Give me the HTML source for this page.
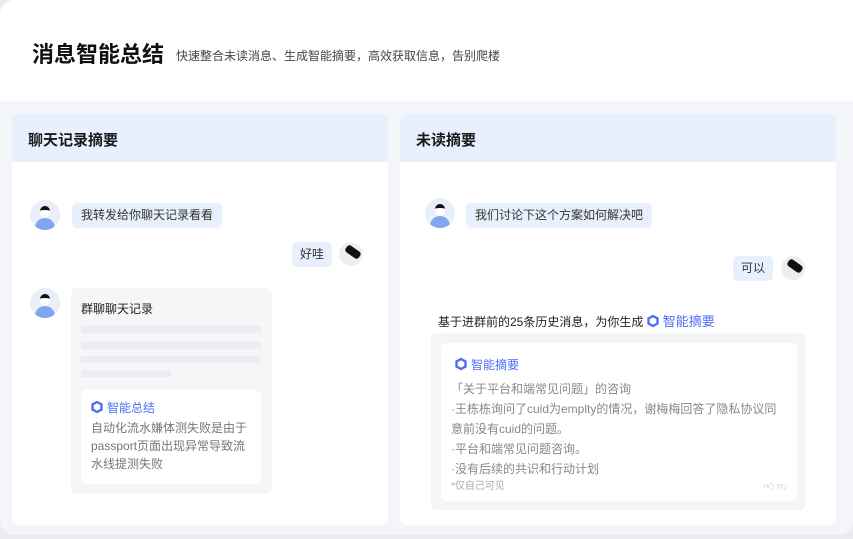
<!DOCTYPE html><html><head><meta charset="utf-8"><style>
*{margin:0;padding:0;box-sizing:border-box}
body{width:853px;height:539px;background:#e9ebf0;font-family:"Liberation Sans","Noto Sans CJK SC",sans-serif;position:relative;overflow:hidden}
.wrap{position:absolute;left:0;top:0;width:853px;height:535px;background:#f3f5f9;border-radius:14px 0 14px 14px;overflow:hidden}
.top{position:absolute;left:0;top:0;width:853px;height:101px;background:#fff}
.h1{position:absolute;left:32px;top:37px;font-size:22px;font-weight:bold;color:#111}
.sub{position:absolute;left:176px;top:47px;font-size:12px;color:#444}
.card{position:absolute;top:114px;height:411px;background:#fff;border-radius:8px;overflow:hidden}
.ch{height:48px;background:#e8f0fd;font-size:15px;font-weight:bold;color:#1a1a1a;padding:15px 0 0 16px}
.av{position:absolute;width:30px;height:30px;border-radius:50%;background:#e9eef8;overflow:hidden}
.av .b{position:absolute;left:5px;top:18px;width:20px;height:16px;border-radius:10px 10px 0 0;background:#7fa6ef}
.av .h{position:absolute;left:10px;top:6px;width:10px;height:12px;border-radius:5px;background:#fff;border-top:4px solid #111}
.av2{position:absolute;width:24px;height:24px;border-radius:50%;background:#eceef2;overflow:hidden}
.av2 .h{position:absolute;left:6px;top:6px;width:16px;height:8px;background:#111;transform:rotate(35deg);border-radius:3px}
.bub{position:absolute;background:#e8f0fd;border-radius:5px;font-size:12px;color:#333;height:25px;line-height:25px;padding:0 9px}
.t{position:absolute;font-size:12px;color:#222}
.g{color:#888}
.blue{color:#4d6ef5}
.ic{display:inline-block;width:12px;height:12px;vertical-align:-1px;margin-right:4px}
</style></head><body>
<div class="wrap">
<div class="top"><div class="h1">消息智能总结</div><div class="sub">快速整合未读消息、生成智能摘要，高效获取信息，告别爬楼</div></div>
<div class="card" style="left:12px;width:376px">
<div class="ch">聊天记录摘要</div>
</div>
<div class="card" style="left:400px;width:436px">
<div class="ch">未读摘要</div>
</div>
</div>
<div class="av" style="left:30px;top:200px"><div class="b"></div><div class="h"></div></div>
<div class="bub" style="left:72px;top:203px">我转发给你聊天记录看看</div>
<div class="bub" style="left:292px;top:242px;padding:0 8px">好哇</div>
<div class="av2" style="left:339px;top:242px"><div class="h"></div></div>
<div class="av" style="left:30px;top:288px"><div class="b"></div><div class="h"></div></div>
<div style="position:absolute;left:71px;top:288px;width:201px;height:206px;background:#f5f6f8;border-radius:6px">
<div class="t" style="left:10px;top:12px">群聊聊天记录</div>
<div style="position:absolute;left:10px;top:38px;width:180px;height:7px;background:#ebedf1"></div>
<div style="position:absolute;left:10px;top:54px;width:180px;height:7px;background:#ebedf1"></div>
<div style="position:absolute;left:10px;top:68px;width:180px;height:7px;background:#ebedf1"></div>
<div style="position:absolute;left:10px;top:82px;width:90px;height:7px;background:#ebedf1"></div>
<div style="position:absolute;left:10px;top:102px;width:180px;height:94px;background:#fff;border-radius:6px;padding:9px 10px;font-size:12px;line-height:19px">
<div class="blue" style="margin-bottom:1px"><svg class="ic" viewBox="0 0 12 12"><path d="M6 1L10.5 3.5V8.5L6 11L1.5 8.5V3.5Z" fill="none" stroke="#4d6ef5" stroke-width="2.4"/></svg>智能总结</div>
<div style="color:#777;line-height:18px">自动化流水嫌体测失败是由于passport页面出现异常导致流水线提测失败</div></div>
</div>
<div class="av" style="left:425px;top:198px"><div class="b"></div><div class="h"></div></div>
<div class="bub" style="left:466px;top:203px">我们讨论下这个方案如何解决吧</div>
<div class="bub" style="left:733px;top:256px;padding:0 8px">可以</div>
<div class="av2" style="left:781px;top:256px"><div class="h"></div></div>
<div class="t" style="left:438px;top:311px">基于进群前的25条历史消息，为你生成 <span class="blue" style="font-size:13px"><svg class="ic" viewBox="0 0 12 12"><path d="M6 1L10.5 3.5V8.5L6 11L1.5 8.5V3.5Z" fill="none" stroke="#4d6ef5" stroke-width="2.4"/></svg>智能摘要</span></div>
<div style="position:absolute;left:431px;top:333px;width:375px;height:177px;background:#f4f5f7;border-radius:6px">
<div style="position:absolute;left:10px;top:10px;width:356px;height:158px;background:#fff;border-radius:6px;padding:12px 10px;font-size:12px;line-height:20px;color:#888">
<div class="blue" style="padding-left:4px;margin-bottom:4px"><svg class="ic" viewBox="0 0 12 12"><path d="M6 1L10.5 3.5V8.5L6 11L1.5 8.5V3.5Z" fill="none" stroke="#4d6ef5" stroke-width="2.4"/></svg>智能摘要</div>
<div style="padding-left:0">「关于平台和端常见问题」的咨询</div>
<div>·王栋栋询问了cuid为emplty的情况，谢梅梅回答了隐私协议同意前没有cuid的问题。</div>
<div>·平台和端常见问题咨询。</div>
<div>·没有后续的共识和行动计划</div>
<div style="font-size:10px;color:#aaa;line-height:16px">*仅自己可见<span style="float:right;color:#ccc">👍︎ 👎︎</span></div>
</div></div>
</body></html>
